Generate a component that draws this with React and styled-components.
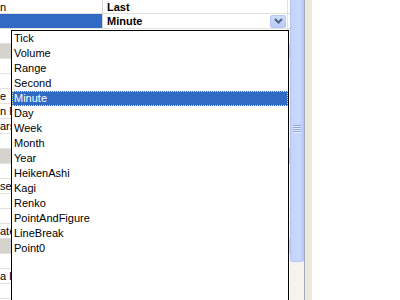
import React from "react";
import styled, { createGlobalStyle } from "styled-components";

const GlobalStyle = createGlobalStyle`
    body {
        margin: 0;
        overflow: hidden;
        background: #ffffff;
        font-family: "Liberation Sans", Arial, sans-serif;
        font-size: 11px;
    }
`;

const Page = styled.div`
    position: relative;
    width: 400px;
    height: 300px;
    display: flex;
    overflow: hidden;
    background: #ffffff;
`;

const Grid = styled.div`
    width: 290px;
    display: flex;
    flex-direction: column;
`;

const Row = styled.div`
    display: flex;
    height: ${(props) => (props.first ? "13px" : "14px")};
    border-bottom: 1px solid #e2e1dc;
    background: ${(props) => (props.category ? "#d6d3ce" : "#ffffff")};
    flex-shrink: 0;
`;

const NameCell = styled.div`
    width: 102px;
    border-right: 1px solid #d6d3ce;
    background: ${(props) => (props.selected ? "#316ac5" : "transparent")};
    color: ${(props) => (props.selected ? "#ffffff" : "#000000")};
    line-height: 14px;
`;

// the list covers the name column from x 11, so only its first pixels show
const NameText = styled.span`
    display: block;
    width: 11px;
    white-space: nowrap;
    overflow: hidden;
`;

const ValueCell = styled.div`
    width: 185px;
    border-right: 1px solid #e2e1dc;
    display: flex;
    align-items: center;
    padding-left: 4px;
    box-sizing: border-box;
    font-weight: bold;
    line-height: 14px;
`;

const ValueText = styled.span`
    flex: 1;
`;

const DropButton = styled.div`
    width: 16px;
    height: 13px;
    margin-right: 1px;
    box-sizing: border-box;
    border: 1px solid #b5c7f1;
    border-radius: 2px;
    background: linear-gradient(#cfdcfd, #b8cbf7);
    display: flex;
    align-items: center;
    justify-content: center;
`;

const ScrollTrack = styled.div`
    width: 14px;
    display: flex;
    flex-direction: column;
    background: #f4f3ee;
    border-right: 1px solid #a0a9bb;
`;

const Thumb = styled.div`
    height: 262px;
    box-sizing: border-box;
    border: 1px solid #b3c6f3;
    border-top: none;
    border-radius: 0 0 3px 3px;
    background: linear-gradient(to right, #c3d3fd, #c9d8fd 70%, #b9cbf6);
    display: flex;
    align-items: center;
    justify-content: center;
`;

const Grip = styled.div`
    width: 8px;
    display: flex;
    flex-direction: column;
    gap: 1px;
    margin-bottom: 4px;
`;

const GripLine = styled.div`
    height: 1px;
    background: #8ea3d8;
    box-shadow: 0 1px 0 #e6eeff;
`;

const Frame = styled.div`
    width: 7px;
    background: #ece9d8;
`;

const DropList = styled.div`
    position: absolute;
    left: 11px;
    top: 30px;
    width: 278px;
    height: 290px;
    box-sizing: border-box;
    border: 1px solid #000000;
    background: #ffffff;
    display: flex;
    flex-direction: column;
`;

const Item = styled.div`
    height: 15px;
    line-height: 15px;
    padding-left: 2px;
    box-sizing: border-box;
    color: ${(props) => (props.selected ? "#ffffff" : "#000000")};
    background: ${(props) => (props.selected ? "#316ac5" : "transparent")};
    outline: ${(props) => (props.selected ? "1px dotted #f0e68c" : "none")};
    outline-offset: -1px;
`;

const rows = [
    { name: "n", value: "Last", first: true },
    { name: "", value: "Minute", selected: true, button: true },
    { name: "" },
    { name: "", category: true },
    { name: "" },
    { name: "" },
    { name: "e" },
    { name: "n B" },
    { name: "ars" },
    { name: "" },
    { name: "", category: true },
    { name: "" },
    { name: "se" },
    { name: "" },
    { name: "" },
    { name: "ate" },
    { name: "", category: true },
    { name: "" },
    { name: "a l" },
    { name: "" },
];

const items = [
    "Tick", "Volume", "Range", "Second", "Minute", "Day", "Week", "Month",
    "Year", "HeikenAshi", "Kagi", "Renko", "PointAndFigure", "LineBreak", "Point0",
];

function Chevron() {
    return (
        <svg width="9" height="6" viewBox="0 0 9 6">
            <polyline points="1,1 4.5,4.5 8,1" fill="none" stroke="#4d6185" strokeWidth="2" />
        </svg>
    );
}

function App() {
    return (
        <Page>
            <GlobalStyle />
            <Grid>
                {rows.map((row, i) => (
                    <Row key={i} first={row.first} category={row.category}>
                        <NameCell selected={row.selected}>
                            {row.name && <NameText>{row.name}</NameText>}
                        </NameCell>
                        {!row.category && (
                            <ValueCell>
                                <ValueText>{row.value}</ValueText>
                                {row.button && (
                                    <DropButton>
                                        <Chevron />
                                    </DropButton>
                                )}
                            </ValueCell>
                        )}
                    </Row>
                ))}
            </Grid>
            <ScrollTrack>
                <Thumb>
                    <Grip>
                        <GripLine />
                        <GripLine />
                        <GripLine />
                        <GripLine />
                    </Grip>
                </Thumb>
            </ScrollTrack>
            <Frame />
            <DropList>
                {items.map((item) => (
                    <Item key={item} selected={item === "Minute"}>{item}</Item>
                ))}
            </DropList>
        </Page>
    );
}

export default App;
